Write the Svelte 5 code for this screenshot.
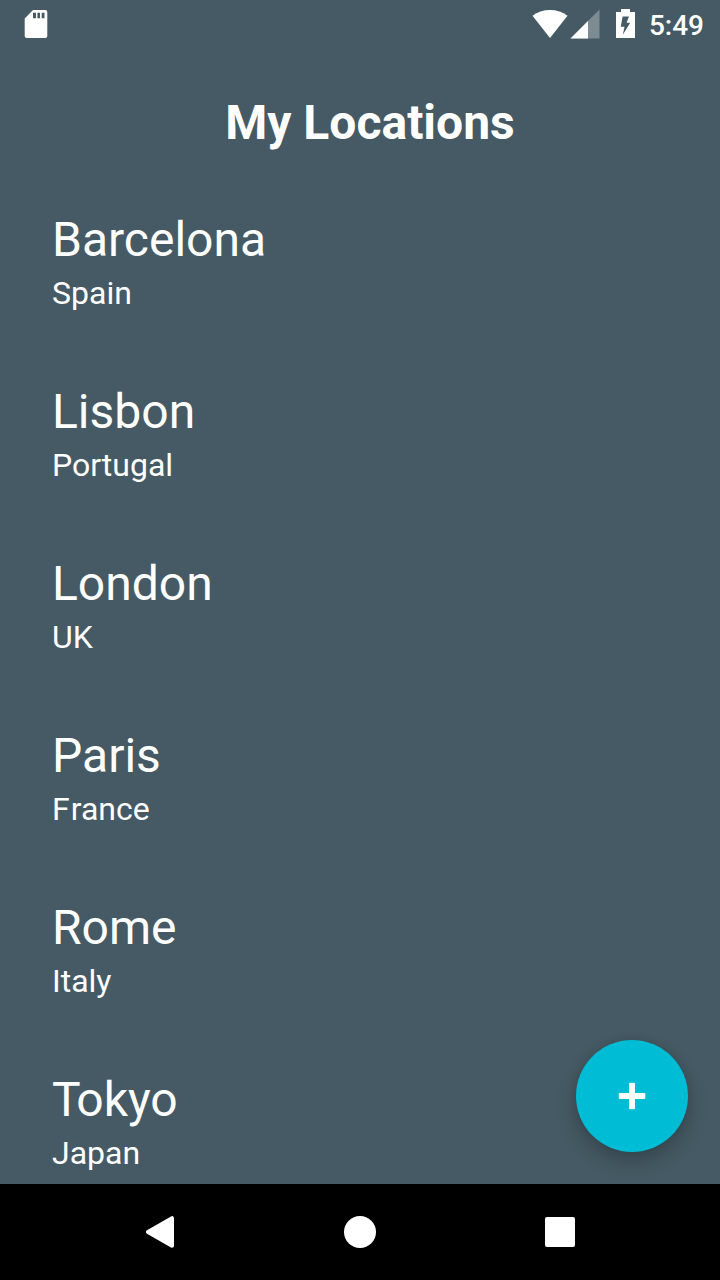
<script>
  const locations = [
    { city: 'Barcelona', country: 'Spain' },
    { city: 'Lisbon', country: 'Portugal' },
    { city: 'London', country: 'UK' },
    { city: 'Paris', country: 'France' },
    { city: 'Rome', country: 'Italy' },
    { city: 'Tokyo', country: 'Japan' }
  ];
  // Optical kerning after the capital, in pixels.
  const kerning = { Tokyo: -4.4, France: 1 };
</script>

<div class="screen">
  <div class="status">
    <svg class="sd" width="24" height="30" viewBox="0 0 24 30" aria-hidden="true">
      <path fill="#fff" fill-rule="evenodd" d="M9 1H21.3Q23.3 1 23.3 3V27Q23.3 29 21.3 29H2.7Q.7 29 .7 27V9.500ZM9 3.800V9.300H12V3.800ZM13.400 3.800V9.300H16V3.800ZM17.700 3.800V9.300H20.500V3.800Z" />
    </svg>
    <svg width="106" height="32" viewBox="0 0 106 32" aria-hidden="true">
      <path fill="#fff" d="M.5 7.800Q8 2 18 2T35.500 7.800L18 30Z" />
      <path fill="#fff" fill-opacity=".3" d="M67.500 1.500V30.500H38.500Z" />
      <path fill="#fff" d="M56 13V30.500H38.500Z" />
      <path fill="#fff" fill-rule="evenodd" d="M89 1H98V4H103V30H84V4H89ZM90.600 8.500L88.800 18.800H92.500L90.800 26.800L98.200 14.800H94.600L97 8.500Z" />
    </svg>
    <span class="time">5:49</span>
  </div>

  <h1>My Locations</h1>

  <ul>
    {#each locations as place}
      <li>
        <span class="city"><span style:letter-spacing="{kerning[place.city] ?? 0}px">{place.city[0]}</span>{place.city.slice(1)}</span>
        <span class="country"><span style:letter-spacing="{kerning[place.country] ?? 0}px">{place.country[0]}</span>{place.country.slice(1)}</span>
      </li>
    {/each}
  </ul>

  <button class="fab" aria-label="Add location">
    <svg width="28" height="28" viewBox="0 0 28 28" aria-hidden="true">
      <rect x=".8" y="11" width="26.500" height="6" rx="1.200" fill="#fff" />
      <rect x="11" y=".8" width="6" height="26.500" rx="1.200" fill="#fff" />
    </svg>
  </button>

  <nav>
    <svg width="32" height="32" viewBox="0 0 32 32" aria-hidden="true">
      <path fill="#fff" stroke="#fff" stroke-width="4" stroke-linejoin="round" d="M28 2.200V29.800L4 16Z" />
    </svg>
    <svg width="32" height="32" viewBox="0 0 32 32" aria-hidden="true">
      <circle cx="16" cy="16" r="16" fill="#fff" />
    </svg>
    <svg width="32" height="32" viewBox="0 0 32 32" aria-hidden="true">
      <rect x="1" y="1" width="30" height="30" rx="2" fill="#fff" />
    </svg>
  </nav>
</div>

<style>
  .screen {
    position: relative;
    display: flex;
    flex-direction: column;
    width: 720px;
    height: 1280px;
    overflow: hidden;
    background: #455a64;
    color: #fff;
    font-family: Roboto, sans-serif;
  }
  .status {
    display: flex;
    align-items: center;
    height: 48px;
    flex: none;
    padding: 0 16px 0 24px;
    box-sizing: border-box;
  }
  .sd {
    margin-right: auto;
  }
  .time {
    margin-left: 11px;
    font-size: 28px;
    font-weight: 500;
    line-height: 32px;
    padding-top: 4px;
  }
  h1 {
    flex: none;
    margin: 47px 0 0;
    padding-left: 20px;
    text-align: center;
    font-size: 48px;
    font-weight: 700;
    line-height: 56px;
  }
  ul {
    flex: 1;
    min-height: 0;
    overflow: hidden;
    list-style: none;
    margin: 45px 0 0;
    padding: 0 52px;
  }
  li {
    display: flex;
    flex-direction: column;
    height: 172px;
    box-sizing: border-box;
    padding-top: 16px;
  }
  .city {
    font-size: 48px;
    line-height: 56px;
  }
  .country {
    margin-top: 6px;
    font-size: 32px;
    line-height: 38px;
  }
  .fab {
    position: absolute;
    right: 32px;
    bottom: 128px;
    display: grid;
    place-items: center;
    width: 112px;
    height: 112px;
    padding: 0;
    border: 0;
    border-radius: 50%;
    background: #00bcd4;
    box-shadow: 0 10px 20px rgba(0, 0, 0, 0.2), 0 1px 8px rgba(0, 0, 0, 0.1);
  }
  nav {
    flex: none;
    display: flex;
    justify-content: space-between;
    align-items: center;
    height: 96px;
    padding: 0 144px;
    box-sizing: border-box;
    background: #000;
  }
  svg {
    display: block;
    flex: none;
  }
</style>
